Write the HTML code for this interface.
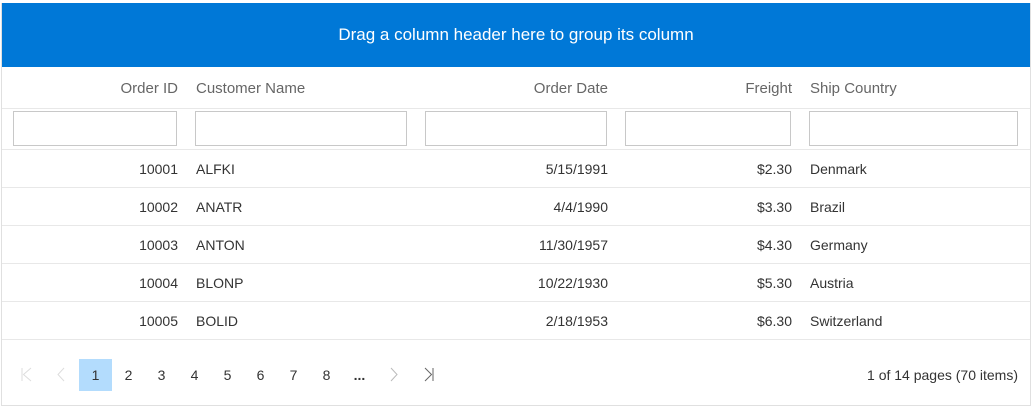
<!DOCTYPE html>
<html><head><style>
*{box-sizing:border-box;margin:0;padding:0}
body{width:1032px;height:406px;background:#fff;font-family:"Segoe UI","Liberation Sans",sans-serif;font-size:14px;color:#333;position:relative;overflow:hidden}
.frame{position:absolute;left:1px;top:3px;width:1030px;height:403px;border:1px solid #e0e0e0;border-top:none}
.hdr{position:absolute;left:1px;top:3px;width:1030px;height:64px;background:#0078d7;color:#fff;font-size:17px;text-align:center;line-height:64px}
.row{position:absolute;left:2px;width:1028px;border-bottom:1px solid #e8e8e8}
.c{position:absolute;top:0;white-space:nowrap}
.r{text-align:right}
.h{color:#666;font-size:15px}
.inp{position:absolute;top:3px;height:35px;border:1px solid #c8c8c8;background:#fff}
.pg{position:absolute;top:359px;width:33px;height:32px;line-height:32px;text-align:center;font-size:14px;color:#333}
</style></head><body>
<div class="hdr">Drag a column header here to group its column</div>
<div class="frame"></div>
<div class="row h" style="top:67px;height:42px;line-height:44px">
<div class="c r" style="left:0;width:176px">Order ID</div>
<div class="c" style="left:194px">Customer Name</div>
<div class="c r" style="left:414px;width:192px">Order Date</div>
<div class="c r" style="left:614px;width:176px">Freight</div>
<div class="c" style="left:808px">Ship Country</div>
</div>
<div class="row" style="top:108px;height:42px">
<div class="inp" style="left:11px;width:164px"></div>
<div class="inp" style="left:193px;width:212px"></div>
<div class="inp" style="left:423px;width:182px"></div>
<div class="inp" style="left:623px;width:166px"></div>
<div class="inp" style="left:807px;width:209px"></div>
</div>
<div class="row" style="top:150px;height:38px;line-height:38px"><div class="c r" style="left:0;width:176px">10001</div><div class="c" style="left:194px">ALFKI</div><div class="c r" style="left:414px;width:192px">5/15/1991</div><div class="c r" style="left:614px;width:176px">$2.30</div><div class="c" style="left:808px">Denmark</div></div>
<div class="row" style="top:188px;height:38px;line-height:38px"><div class="c r" style="left:0;width:176px">10002</div><div class="c" style="left:194px">ANATR</div><div class="c r" style="left:414px;width:192px">4/4/1990</div><div class="c r" style="left:614px;width:176px">$3.30</div><div class="c" style="left:808px">Brazil</div></div>
<div class="row" style="top:226px;height:38px;line-height:38px"><div class="c r" style="left:0;width:176px">10003</div><div class="c" style="left:194px">ANTON</div><div class="c r" style="left:414px;width:192px">11/30/1957</div><div class="c r" style="left:614px;width:176px">$4.30</div><div class="c" style="left:808px">Germany</div></div>
<div class="row" style="top:264px;height:38px;line-height:38px"><div class="c r" style="left:0;width:176px">10004</div><div class="c" style="left:194px">BLONP</div><div class="c r" style="left:414px;width:192px">10/22/1930</div><div class="c r" style="left:614px;width:176px">$5.30</div><div class="c" style="left:808px">Austria</div></div>
<div class="row" style="top:302px;height:38px;line-height:38px"><div class="c r" style="left:0;width:176px">10005</div><div class="c" style="left:194px">BOLID</div><div class="c r" style="left:414px;width:192px">2/18/1953</div><div class="c r" style="left:614px;width:176px">$6.30</div><div class="c" style="left:808px">Switzerland</div></div>
<svg style="position:absolute;left:20px;top:367px" width="14" height="16"><path d="M2 1V14M11 1L3.5 7.5L11 14" stroke="#ddd" fill="none" stroke-width="1"/></svg>
<svg style="position:absolute;left:56px;top:367px" width="10" height="16"><path d="M8 1L2 7.5L8 14" stroke="#ddd" fill="none"/></svg>
<div class="pg" style="left:79px;background:#b3dcfd">1</div>
<div class="pg" style="left:112px">2</div>
<div class="pg" style="left:145px">3</div>
<div class="pg" style="left:178px">4</div>
<div class="pg" style="left:211px">5</div>
<div class="pg" style="left:244px">6</div>
<div class="pg" style="left:277px">7</div>
<div class="pg" style="left:310px">8</div>
<div class="pg" style="left:343px;font-weight:bold">...</div>
<svg style="position:absolute;left:389px;top:367px" width="10" height="16"><path d="M2 1L8 7.5L2 14" stroke="#bbb" fill="none"/></svg>
<svg style="position:absolute;left:423px;top:367px" width="12" height="16"><path d="M2 1L8.5 7.5L2 14M10 1V14" stroke="#666" fill="none"/></svg>
<div style="position:absolute;right:14px;top:359px;line-height:32px">1 of 14 pages (70 items)</div>
</body></html>
